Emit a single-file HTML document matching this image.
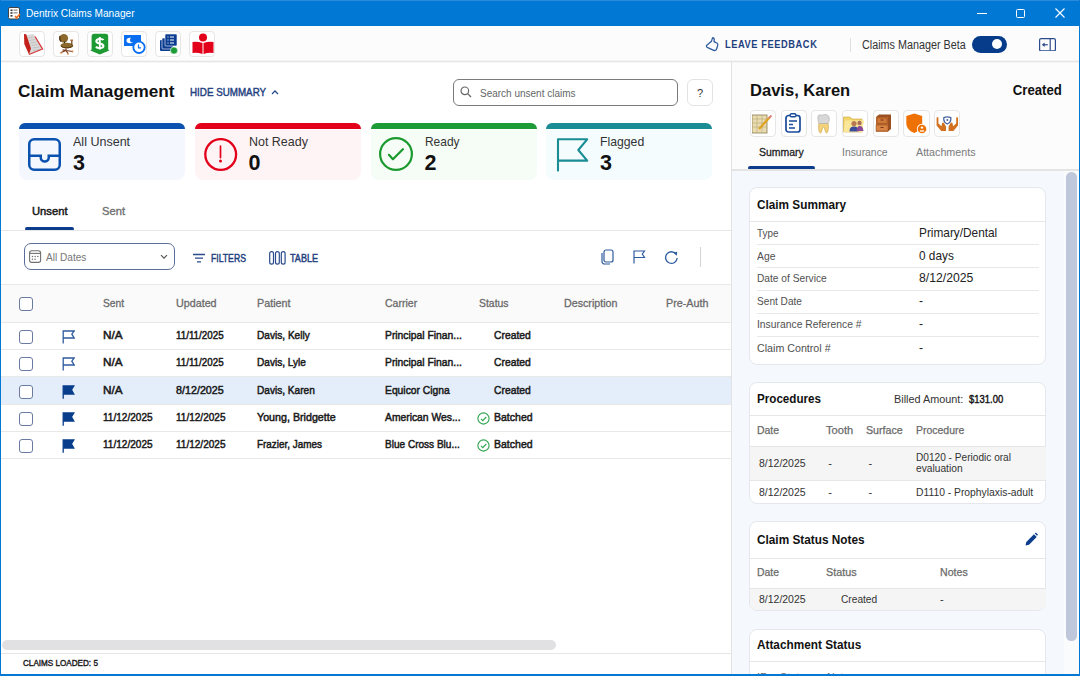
<!DOCTYPE html>
<html><head><meta charset="utf-8"><title>Dentrix Claims Manager</title>
<style>
html,body{margin:0;padding:0;width:1080px;height:676px;overflow:hidden;background:#fff}
body{position:relative;font-family:"Liberation Sans", sans-serif}
body>div,body>span,body>svg{position:absolute;display:block}
body>span{white-space:nowrap}
svg text{font-family:"Liberation Sans", sans-serif}
</style></head><body>
<div style="left:0px;top:0px;width:1080px;height:26px;background:#0078d4"></div>
<div style="left:0px;top:0px;width:1080px;height:1px;background:#2b8ada"></div>
<svg style="left:8px;top:7px;" width="13" height="13" viewBox="0 0 13 13"><rect x="0.5" y="0.5" width="11" height="11.5" rx="1.5" fill="#fff" stroke="#444" stroke-width="1"/>
<rect x="2.5" y="2.5" width="2" height="1.6" fill="#333"/><rect x="5.5" y="2.5" width="4" height="1.2" fill="#888"/>
<rect x="2.5" y="5.2" width="2" height="1.6" fill="#333"/><rect x="5.5" y="5.2" width="4" height="1.2" fill="#888"/>
<rect x="2.5" y="8" width="2" height="1.6" fill="#333"/>
<path d="M7 9 L8.6 10.8 L12 7" stroke="#f06a1a" stroke-width="1.6" fill="none"/></svg>
<span style="left:26px;transform-origin:left center;top:7.65px;font-size:11.05px;line-height:11.05px;font-weight:400;color:#ffffff;transform:scaleX(0.9157);">Dentrix Claims Manager</span>
<div style="left:977px;top:13px;width:10px;height:1px;background:#ffffff"></div>
<div style="left:1016px;top:8.5px;width:9px;height:9px;border:1px solid #fff;border-radius:1.5px;box-sizing:border-box"></div>
<svg style="left:1055px;top:8px;" width="10" height="10" viewBox="0 0 10 10"><path d="M0.5 0.5 L9.5 9.5 M9.5 0.5 L0.5 9.5" stroke="#fff" stroke-width="1.1"/></svg>
<div style="left:0px;top:26px;width:1080px;height:35px;background:#fcfcfc"></div>
<div style="left:19px;top:31px;width:26px;height:26px;background:#fff;border:1px solid #e6e6e6;border-radius:4px;box-sizing:border-box"></div>
<div style="left:53px;top:31px;width:26px;height:26px;background:#fff;border:1px solid #e6e6e6;border-radius:4px;box-sizing:border-box"></div>
<div style="left:87px;top:31px;width:26px;height:26px;background:#fff;border:1px solid #e6e6e6;border-radius:4px;box-sizing:border-box"></div>
<div style="left:121px;top:31px;width:26px;height:26px;background:#fff;border:1px solid #e6e6e6;border-radius:4px;box-sizing:border-box"></div>
<div style="left:155px;top:31px;width:26px;height:26px;background:#fff;border:1px solid #e6e6e6;border-radius:4px;box-sizing:border-box"></div>
<div style="left:189px;top:31px;width:26px;height:26px;background:#fff;border:1px solid #e6e6e6;border-radius:4px;box-sizing:border-box"></div>
<svg style="left:20px;top:31px;" width="26" height="26" viewBox="0 0 26 26"><path d="M6 4 L13.5 3 L22.5 18 L9 23.5 Z" fill="#d9d9d9"/>
<path d="M8.5 7 L13.5 6 M9.5 9.5 L15 8.5 M10.5 12 L16.5 11 M11.5 14.5 L18 13.5 M12.5 17 L19.5 16 M13 19.5 L20 18.5" stroke="#b8b8b8" stroke-width="0.7"/>
<path d="M15 5.5 L22.5 18 L9 23.5" fill="none" stroke="#d43a3a" stroke-width="1.3"/>
<path d="M4 3 L6.2 3.3 L11 17.5 L9 23.5 L4.3 13 Z" fill="#c4201c"/></svg>
<svg style="left:54px;top:31px;" width="26" height="26" viewBox="0 0 26 26"><ellipse cx="9.8" cy="7.2" rx="4.3" ry="4.3" fill="#8c6a2c"/>
<path d="M6 5 C5.5 7 5.8 9.5 7 10.5" stroke="#4a2a0a" stroke-width="1.2" fill="none"/>
<rect x="9.8" y="10.5" width="1.4" height="3" fill="#3a2a1a"/>
<ellipse cx="12.8" cy="14.5" rx="6.3" ry="2.8" fill="#8a6a2a"/>
<path d="M7 15 C9 17.5 16 17.5 19 15" stroke="#4a2a0a" stroke-width="0.9" fill="none"/>
<path d="M17.8 9.5 V14" stroke="#6a4a2a" stroke-width="1.3"/><path d="M16.3 9.2 H19" stroke="#b0602a" stroke-width="1.3"/>
<path d="M12 17.5 V19.5 M12 19.5 L7 21.5 M12 19.5 L14 22.5 M12 19.5 L18.5 20.5 M12 19.5 L8.5 18.8" stroke="#7a3a1a" stroke-width="1.2"/>
<circle cx="7" cy="21.8" r="0.9" fill="#d08040"/><circle cx="14" cy="22.8" r="0.9" fill="#d08040"/><circle cx="18.5" cy="20.5" r="0.9" fill="#d08040"/></svg>
<svg style="left:88px;top:31px;" width="26" height="26" viewBox="0 0 26 26"><path d="M6.2 2.8 H17.6 A2.6 2.6 0 0 1 20.2 5.4 V18.4 L21.3 19.4 L11.8 23.6 L2.3 19.4 L3.6 18.4 V5.4 A2.6 2.6 0 0 1 6.2 2.8 Z" fill="#1e9a35"/>
<path d="M15.4 9 C14.6 7.6 8.4 7.2 8.3 10.2 C8.2 13.2 15.4 11.6 15.4 14.9 C15.4 17.6 9.2 17.5 8 15.6" fill="none" stroke="#fff" stroke-width="2.1"/>
<path d="M11.8 6 V18.6" stroke="#fff" stroke-width="1.8"/></svg>
<svg style="left:124px;top:34px;" width="22" height="20" viewBox="0 0 22 20"><rect x="0" y="1" width="17" height="11" fill="#0a6ef0"/>
<ellipse cx="6" cy="6.5" rx="3.5" ry="2.8" fill="#fff"/><circle cx="8.5" cy="6" r="2.5" fill="#0a6ef0"/>
<circle cx="15" cy="13.3" r="5.7" fill="#fff" stroke="#0a6ef0" stroke-width="1.8"/>
<path d="M14.5 10.5 V13.8 H17" stroke="#0a6ef0" stroke-width="1.2" fill="none"/></svg>
<svg style="left:160px;top:34px;" width="18" height="20" viewBox="0 0 18 20"><rect x="0" y="6" width="11" height="11" rx="1" fill="#0b3d91"/>
<rect x="2" y="4" width="11" height="11" rx="1" fill="#0b3d91" stroke="#fff" stroke-width="0.6"/>
<rect x="5" y="0" width="12" height="12" rx="1" fill="#0b3d91" stroke="#fff" stroke-width="0.6"/>
<path d="M7.5 3 H8.5 M10 3 H14 M7.5 6 H8.5 M10 6 H14 M7.5 9 H8.5 M10 9 H14" stroke="#fff" stroke-width="1"/>
<circle cx="14" cy="16.5" r="3.6" fill="#1c9b37" stroke="#fff" stroke-width="0.6"/></svg>
<svg style="left:192px;top:33px;" width="22" height="22" viewBox="0 0 22 22"><circle cx="11" cy="4.5" r="4" fill="#e2001a"/>
<path d="M0.5 9 Q5 8 10.5 10 V21 Q5 19 0.5 20 Z" fill="#e2001a"/>
<path d="M21.5 9 Q17 8 11.5 10 V21 Q17 19 21.5 20 Z" fill="#e2001a"/></svg>
<svg style="left:704px;top:36px;" width="16" height="16" viewBox="0 0 16 16"><path d="M9.3 1.8 C10.3 2.2 10.4 4 10 5.6 L13.2 7.3 C14 7.8 13.9 8.8 13.6 9.6 L12.7 12.8 C12.3 14.2 11 14.8 9.7 14.3 L3.2 11.4 C2.4 11 2.2 9.9 2.8 9.2 L7.2 5.6 C7.8 4.6 8.2 2.8 8.4 2.2 C8.6 1.8 9 1.7 9.3 1.8 Z" fill="none" stroke="#2f5b9f" stroke-width="1.3" stroke-linejoin="round"/></svg>
<span style="left:724.5px;transform-origin:left center;top:38.53px;font-size:11.19px;line-height:11.19px;font-weight:700;color:#1f3f7f;transform:scaleX(0.8285);letter-spacing:0.7px">LEAVE FEEDBACK</span>
<div style="left:850px;top:38px;width:1px;height:14px;background:#e0e0e0"></div>
<span style="left:862px;transform-origin:left center;top:39.16px;font-size:12.21px;line-height:12.21px;font-weight:400;color:#333;transform:scaleX(0.8837);">Claims Manager Beta</span>
<div style="left:972.4px;top:35.7px;width:34.3px;height:17px;background:#063c8a;border-radius:8.5px"></div>
<div style="left:992.3px;top:39.3px;width:10.2px;height:10.2px;background:#fff;border-radius:50%"></div>
<svg style="left:1039px;top:37.5px;" width="17" height="13.5" viewBox="0 0 17 13.5"><rect x="0.6" y="0.6" width="15.8" height="12.3" rx="1.5" fill="none" stroke="#2b4b8c" stroke-width="1.2"/>
<path d="M11.2 1 V12.5" stroke="#2b4b8c" stroke-width="1.2"/>
<path d="M8.8 6.75 H4" stroke="#2b4b8c" stroke-width="1.2"/><path d="M2.8 6.75 L5.6 4.4 V9.1 Z" fill="#2b4b8c"/></svg>
<div style="left:0px;top:62px;width:731px;height:614px;background:#fff"></div>
<span style="left:18px;transform-origin:left center;top:84.23px;font-size:16.86px;line-height:16.86px;font-weight:700;color:#111;transform:scaleX(1.0185);">Claim Management</span>
<span style="left:189.7px;transform-origin:left center;top:87.13px;font-size:11.19px;line-height:11.19px;font-weight:400;color:#1f3f7f;transform:scaleX(0.8764);-webkit-text-stroke:0.45px #1f3f7f">HIDE SUMMARY</span>
<svg style="left:270.8px;top:89px;" width="8" height="6" viewBox="0 0 8 6"><path d="M1 5 L4 2 L7 5" stroke="#2b4b8c" stroke-width="1.3" fill="none"/></svg>
<div style="left:453px;top:79px;width:225px;height:27px;border:1px solid #7a7a7a;border-radius:6px;box-sizing:border-box;background:#fff"></div>
<svg style="left:460px;top:86px;" width="12" height="12" viewBox="0 0 12 12"><circle cx="4.8" cy="4.8" r="3.8" fill="none" stroke="#666" stroke-width="1.2"/><path d="M7.6 7.6 L11 11" stroke="#666" stroke-width="1.3"/></svg>
<span style="left:479.5px;transform-origin:left center;top:87.65px;font-size:11.05px;line-height:11.05px;font-weight:400;color:#666;transform:scaleX(0.9043);">Search unsent claims</span>
<div style="left:687px;top:79px;width:26px;height:27px;border:1px solid #e3e3e3;border-radius:6px;box-sizing:border-box;background:#fff"></div>
<span style="left:696.94px;transform-origin:center;top:87.69px;font-size:11px;line-height:11px;font-weight:400;color:#333;">?</span>
<div style="left:19px;top:123.2px;width:166px;height:5.6px;background:#0b52b0;border-radius:8px 8px 0 0"></div>
<div style="left:19px;top:129.8px;width:166px;height:50.6px;background:#f4f8fe;border-radius:0 0 8px 8px"></div>
<span style="left:73px;transform-origin:left center;top:136.07px;font-size:12.79px;line-height:12.79px;font-weight:400;color:#333;transform:scaleX(0.9800);">All Unsent</span>
<span style="left:73px;transform-origin:left center;top:152.99px;font-size:21.51px;line-height:21.51px;font-weight:700;color:#111;">3</span>
<div style="left:194.5px;top:123.2px;width:166px;height:5.6px;background:#e2001a;border-radius:8px 8px 0 0"></div>
<div style="left:194.5px;top:129.8px;width:166px;height:50.6px;background:#fff4f5;border-radius:0 0 8px 8px"></div>
<span style="left:248.5px;transform-origin:left center;top:136.07px;font-size:12.79px;line-height:12.79px;font-weight:400;color:#333;transform:scaleX(0.9753);">Not Ready</span>
<span style="left:248.5px;transform-origin:left center;top:152.99px;font-size:21.51px;line-height:21.51px;font-weight:700;color:#111;">0</span>
<div style="left:370.5px;top:123.2px;width:166px;height:5.6px;background:#1c9b37;border-radius:8px 8px 0 0"></div>
<div style="left:370.5px;top:129.8px;width:166px;height:50.6px;background:#f5fdf6;border-radius:0 0 8px 8px"></div>
<span style="left:424.5px;transform-origin:left center;top:136.07px;font-size:12.79px;line-height:12.79px;font-weight:400;color:#333;transform:scaleX(0.9336);">Ready</span>
<span style="left:424.5px;transform-origin:left center;top:152.99px;font-size:21.51px;line-height:21.51px;font-weight:700;color:#111;">2</span>
<div style="left:546px;top:123.2px;width:166px;height:5.6px;background:#1a8c94;border-radius:8px 8px 0 0"></div>
<div style="left:546px;top:129.8px;width:166px;height:50.6px;background:#f5fcfe;border-radius:0 0 8px 8px"></div>
<span style="left:600px;transform-origin:left center;top:136.07px;font-size:12.79px;line-height:12.79px;font-weight:400;color:#333;transform:scaleX(0.9566);">Flagged</span>
<span style="left:600px;transform-origin:left center;top:152.99px;font-size:21.51px;line-height:21.51px;font-weight:700;color:#111;">3</span>
<svg style="left:28px;top:138px;" width="34" height="34" viewBox="0 0 34 34"><rect x="1.25" y="1.25" width="30.5" height="30.5" rx="5" fill="none" stroke="#0b52b0" stroke-width="2.5"/>
<path d="M1.25 17.7 H12.75 V19.6 A4 4 0 0 0 20.75 19.6 V17.7 H31.75" fill="none" stroke="#0b52b0" stroke-width="2.5"/></svg>
<svg style="left:204px;top:138px;" width="34" height="34" viewBox="0 0 34 34"><circle cx="16.7" cy="16.5" r="15.4" fill="none" stroke="#e2001a" stroke-width="2.3"/>
<path d="M16.5 8 V19.6" stroke="#e2001a" stroke-width="1.7" stroke-linecap="round"/><circle cx="16.5" cy="23" r="1.5" fill="#e2001a"/></svg>
<svg style="left:379px;top:137px;" width="35" height="35" viewBox="0 0 35 35"><circle cx="17" cy="17" r="15.9" fill="none" stroke="#1a9a2e" stroke-width="2.2"/>
<path d="M9.9 17.8 L13.9 22.2 L23.9 12.2" fill="none" stroke="#1a9a2e" stroke-width="2.2" stroke-linecap="round" stroke-linejoin="round"/></svg>
<svg style="left:556px;top:137px;" width="33" height="35" viewBox="0 0 33 35"><path d="M2 33.6 V2.3 H31.2 L22.3 13 L31.2 23.6 H2" fill="none" stroke="#1a8c94" stroke-width="2.1" stroke-linecap="round" stroke-linejoin="round"/></svg>
<span style="left:31.7px;transform-origin:left center;top:206.20px;font-size:11.34px;line-height:11.34px;font-weight:400;color:#1a1a1a;transform:scaleX(0.9887);-webkit-text-stroke:0.5px #1a1a1a">Unsent</span>
<span style="left:101.7px;transform-origin:left center;top:206.20px;font-size:11.34px;line-height:11.34px;font-weight:400;color:#707070;transform:scaleX(0.9866);-webkit-text-stroke:0.35px #707070">Sent</span>
<div style="left:25px;top:227px;width:49px;height:3.5px;background:#0b3d8c;border-radius:2px"></div>
<div style="left:1px;top:230px;width:730px;height:1px;background:#e6e6e6"></div>
<div style="left:24px;top:243px;width:151px;height:27px;border:1px solid #5b6e99;border-radius:7px;box-sizing:border-box"></div>
<svg style="left:28px;top:249px;" width="14" height="15" viewBox="0 0 14 15"><rect x="1.6" y="1.8" width="11" height="11.6" rx="2.2" fill="none" stroke="#707070" stroke-width="1.1"/>
<path d="M1.6 4.4 H12.6" stroke="#707070" stroke-width="1.1"/>
<circle cx="4.5" cy="7.6" r="0.75" fill="#707070"/><circle cx="7.1" cy="7.6" r="0.75" fill="#707070"/><circle cx="9.8" cy="7.6" r="0.75" fill="#707070"/>
<circle cx="4.5" cy="10.3" r="0.75" fill="#707070"/><circle cx="7.1" cy="10.3" r="0.75" fill="#707070"/></svg>
<span style="left:46.3px;transform-origin:left center;top:251.57px;font-size:10.9px;line-height:10.9px;font-weight:400;color:#777;transform:scaleX(0.9267);">All Dates</span>
<svg style="left:160px;top:254px;" width="8" height="6" viewBox="0 0 8 6"><path d="M1 1.2 L4 4.2 L7 1.2" stroke="#555" stroke-width="1.2" fill="none"/></svg>
<svg style="left:192px;top:252px;" width="14" height="12" viewBox="0 0 14 12"><path d="M1 2.5 H13 M3 6.2 H11 M5 9.9 H9" stroke="#2b4b8c" stroke-width="1.3"/></svg>
<span style="left:210.6px;transform-origin:left center;top:253.18px;font-size:11.48px;line-height:11.48px;font-weight:400;color:#1f3f7f;transform:scaleX(0.7536);-webkit-text-stroke:0.5px #1f3f7f">FILTERS</span>
<svg style="left:268.5px;top:250.5px;" width="17" height="14" viewBox="0 0 17 14"><rect x="0.7" y="0.7" width="3.8" height="12.4" rx="1.9" fill="none" stroke="#2b4b8c" stroke-width="1.2"/>
<rect x="6.5" y="0.7" width="3.8" height="12.4" rx="1.9" fill="none" stroke="#2b4b8c" stroke-width="1.2"/>
<rect x="12.3" y="0.7" width="3.8" height="12.4" rx="1.9" fill="none" stroke="#2b4b8c" stroke-width="1.2"/></svg>
<span style="left:289.7px;transform-origin:left center;top:253.18px;font-size:11.48px;line-height:11.48px;font-weight:400;color:#1f3f7f;transform:scaleX(0.7891);-webkit-text-stroke:0.5px #1f3f7f">TABLE</span>
<svg style="left:601px;top:249px;" width="13" height="16" viewBox="0 0 13 16"><rect x="3" y="1" width="9" height="12" rx="2" fill="none" stroke="#2f5b9f" stroke-width="1.2"/>
<path d="M1 4 V12.5 A2.5 2.5 0 0 0 3.5 15 H9" fill="none" stroke="#2f5b9f" stroke-width="1.2"/></svg>
<svg style="left:633px;top:250px;" width="13" height="14" viewBox="0 0 13 14"><path d="M1 13.5 V1 H11.5 L9.3 4 L11.5 7.5 H1" fill="none" stroke="#2f5b9f" stroke-width="1.2"/></svg>
<svg style="left:664px;top:250px;" width="15" height="15" viewBox="0 0 15 15"><path d="M12 4 A5.8 5.8 0 1 0 13.2 8" fill="none" stroke="#2f5b9f" stroke-width="1.3"/>
<path d="M9.5 2.8 L13.2 1.8 L12.8 5.8 Z" fill="#2f5b9f"/></svg>
<div style="left:700px;top:247px;width:1px;height:20px;background:#d4d4d4"></div>
<div style="left:1px;top:284px;width:730px;height:1px;background:#e8e8e8"></div>
<div style="left:1px;top:285px;width:730px;height:37px;background:#fafafa"></div>
<div style="left:1px;top:322px;width:730px;height:1.3px;background:#e8e8e8"></div>
<div style="left:19.2px;top:296.6px;width:14px;height:14px;border:1.6px solid #6b7aa0;border-radius:3px;box-sizing:border-box;background:#fff"></div>
<span style="left:103.4px;transform-origin:left center;top:297.50px;font-size:11.34px;line-height:11.34px;font-weight:400;color:#6a6a6a;transform:scaleX(0.9051);-webkit-text-stroke:0.3px #6a6a6a">Sent</span>
<span style="left:176px;transform-origin:left center;top:297.50px;font-size:11.34px;line-height:11.34px;font-weight:400;color:#6a6a6a;transform:scaleX(0.9476);-webkit-text-stroke:0.3px #6a6a6a">Updated</span>
<span style="left:256.8px;transform-origin:left center;top:297.50px;font-size:11.34px;line-height:11.34px;font-weight:400;color:#6a6a6a;transform:scaleX(0.9523);-webkit-text-stroke:0.3px #6a6a6a">Patient</span>
<span style="left:385px;transform-origin:left center;top:297.50px;font-size:11.34px;line-height:11.34px;font-weight:400;color:#6a6a6a;transform:scaleX(0.9300);-webkit-text-stroke:0.3px #6a6a6a">Carrier</span>
<span style="left:478.5px;transform-origin:left center;top:297.50px;font-size:11.34px;line-height:11.34px;font-weight:400;color:#6a6a6a;transform:scaleX(0.9214);-webkit-text-stroke:0.3px #6a6a6a">Status</span>
<span style="left:564.2px;transform-origin:left center;top:297.50px;font-size:11.34px;line-height:11.34px;font-weight:400;color:#6a6a6a;transform:scaleX(0.9440);-webkit-text-stroke:0.3px #6a6a6a">Description</span>
<span style="left:666.4px;transform-origin:left center;top:297.50px;font-size:11.34px;line-height:11.34px;font-weight:400;color:#6a6a6a;transform:scaleX(0.9481);-webkit-text-stroke:0.3px #6a6a6a">Pre-Auth</span>
<div style="left:1px;top:349.0px;width:730px;height:1.3px;background:#e8e8e8"></div>
<div style="left:19.2px;top:329.7px;width:14px;height:14px;border:1.6px solid #6b7aa0;border-radius:3px;box-sizing:border-box;background:#fff"></div>
<svg style="left:61.5px;top:329.7px;" width="13" height="14" viewBox="0 0 13 14"><path d="M1.2 13.5 V1 H12.2 L9.8 4.2 L12.2 8 H1.2" fill="none" stroke="#2f5b9f" stroke-width="1.3"/></svg>
<span style="left:103.4px;transform-origin:left center;top:329.73px;font-size:11.19px;line-height:11.19px;font-weight:400;color:#1a1a1a;transform:scaleX(1.0506);-webkit-text-stroke:0.5px #1a1a1a">N/A</span>
<span style="left:176px;transform-origin:left center;top:329.73px;font-size:11.19px;line-height:11.19px;font-weight:400;color:#1a1a1a;transform:scaleX(0.8759);-webkit-text-stroke:0.5px #1a1a1a">11/11/2025</span>
<span style="left:256.8px;transform-origin:left center;top:329.73px;font-size:11.19px;line-height:11.19px;font-weight:400;color:#1a1a1a;transform:scaleX(0.9033);-webkit-text-stroke:0.5px #1a1a1a">Davis, Kelly</span>
<span style="left:385px;transform-origin:left center;top:329.73px;font-size:11.19px;line-height:11.19px;font-weight:400;color:#1a1a1a;transform:scaleX(0.9229);-webkit-text-stroke:0.5px #1a1a1a">Principal Finan...</span>
<span style="left:494px;transform-origin:left center;top:329.73px;font-size:11.19px;line-height:11.19px;font-weight:400;color:#1a1a1a;transform:scaleX(0.9243);-webkit-text-stroke:0.5px #1a1a1a">Created</span>
<div style="left:1px;top:376.40000000000003px;width:730px;height:1.3px;background:#e8e8e8"></div>
<div style="left:19.2px;top:357.09999999999997px;width:14px;height:14px;border:1.6px solid #6b7aa0;border-radius:3px;box-sizing:border-box;background:#fff"></div>
<svg style="left:61.5px;top:357.09999999999997px;" width="13" height="14" viewBox="0 0 13 14"><path d="M1.2 13.5 V1 H12.2 L9.8 4.2 L12.2 8 H1.2" fill="none" stroke="#2f5b9f" stroke-width="1.3"/></svg>
<span style="left:103.4px;transform-origin:left center;top:357.13px;font-size:11.19px;line-height:11.19px;font-weight:400;color:#1a1a1a;transform:scaleX(1.0506);-webkit-text-stroke:0.5px #1a1a1a">N/A</span>
<span style="left:176px;transform-origin:left center;top:357.13px;font-size:11.19px;line-height:11.19px;font-weight:400;color:#1a1a1a;transform:scaleX(0.8759);-webkit-text-stroke:0.5px #1a1a1a">11/11/2025</span>
<span style="left:256.8px;transform-origin:left center;top:357.13px;font-size:11.19px;line-height:11.19px;font-weight:400;color:#1a1a1a;transform:scaleX(0.9003);-webkit-text-stroke:0.5px #1a1a1a">Davis, Lyle</span>
<span style="left:385px;transform-origin:left center;top:357.13px;font-size:11.19px;line-height:11.19px;font-weight:400;color:#1a1a1a;transform:scaleX(0.9229);-webkit-text-stroke:0.5px #1a1a1a">Principal Finan...</span>
<span style="left:494px;transform-origin:left center;top:357.13px;font-size:11.19px;line-height:11.19px;font-weight:400;color:#1a1a1a;transform:scaleX(0.9243);-webkit-text-stroke:0.5px #1a1a1a">Created</span>
<div style="left:1px;top:377.1px;width:730px;height:27.5px;background:#e4eefb"></div>
<div style="left:1px;top:403.90000000000003px;width:730px;height:1.3px;background:#e8e8e8"></div>
<div style="left:19.2px;top:384.5px;width:14px;height:14px;border:1.6px solid #6b7aa0;border-radius:3px;box-sizing:border-box;background:#fff"></div>
<svg style="left:61.5px;top:384.70000000000005px;" width="13" height="14" viewBox="0 0 13 14"><path d="M1.2 13.8 V1 H11.8 L9.4 4.8 L11.8 9.1 H1.2" fill="#073d8a" stroke="#073d8a" stroke-width="1.3"/></svg>
<span style="left:103.4px;transform-origin:left center;top:384.53px;font-size:11.19px;line-height:11.19px;font-weight:400;color:#1a1a1a;transform:scaleX(1.0506);-webkit-text-stroke:0.5px #1a1a1a">N/A</span>
<span style="left:176px;transform-origin:left center;top:384.53px;font-size:11.19px;line-height:11.19px;font-weight:400;color:#1a1a1a;transform:scaleX(0.9602);-webkit-text-stroke:0.5px #1a1a1a">8/12/2025</span>
<span style="left:256.8px;transform-origin:left center;top:384.53px;font-size:11.19px;line-height:11.19px;font-weight:400;color:#1a1a1a;transform:scaleX(0.9025);-webkit-text-stroke:0.5px #1a1a1a">Davis, Karen</span>
<span style="left:385px;transform-origin:left center;top:384.53px;font-size:11.19px;line-height:11.19px;font-weight:400;color:#1a1a1a;transform:scaleX(0.9220);-webkit-text-stroke:0.5px #1a1a1a">Equicor Cigna</span>
<span style="left:494px;transform-origin:left center;top:384.53px;font-size:11.19px;line-height:11.19px;font-weight:400;color:#1a1a1a;transform:scaleX(0.9243);-webkit-text-stroke:0.5px #1a1a1a">Created</span>
<div style="left:1px;top:430.8px;width:730px;height:1.3px;background:#e8e8e8"></div>
<div style="left:19.2px;top:412.0px;width:14px;height:14px;border:1.6px solid #6b7aa0;border-radius:3px;box-sizing:border-box;background:#fff"></div>
<svg style="left:61.5px;top:412.20000000000005px;" width="13" height="14" viewBox="0 0 13 14"><path d="M1.2 13.8 V1 H11.8 L9.4 4.8 L11.8 9.1 H1.2" fill="#073d8a" stroke="#073d8a" stroke-width="1.3"/></svg>
<span style="left:103.4px;transform-origin:left center;top:412.03px;font-size:11.19px;line-height:11.19px;font-weight:400;color:#1a1a1a;transform:scaleX(0.8990);-webkit-text-stroke:0.5px #1a1a1a">11/12/2025</span>
<span style="left:176px;transform-origin:left center;top:412.03px;font-size:11.19px;line-height:11.19px;font-weight:400;color:#1a1a1a;transform:scaleX(0.8972);-webkit-text-stroke:0.5px #1a1a1a">11/12/2025</span>
<span style="left:256.8px;transform-origin:left center;top:412.03px;font-size:11.19px;line-height:11.19px;font-weight:400;color:#1a1a1a;transform:scaleX(0.9559);-webkit-text-stroke:0.5px #1a1a1a">Young, Bridgette</span>
<span style="left:385px;transform-origin:left center;top:412.03px;font-size:11.19px;line-height:11.19px;font-weight:400;color:#1a1a1a;transform:scaleX(0.9223);-webkit-text-stroke:0.5px #1a1a1a">American Wes...</span>
<svg style="left:477px;top:411.6px;" width="13" height="13" viewBox="0 0 13 13"><circle cx="6.5" cy="6.5" r="5.6" fill="none" stroke="#2ea44f" stroke-width="1.1"/><path d="M4 6.8 L5.8 8.6 L9.2 5" fill="none" stroke="#2ea44f" stroke-width="1.1"/></svg>
<span style="left:494px;transform-origin:left center;top:412.03px;font-size:11.19px;line-height:11.19px;font-weight:400;color:#1a1a1a;transform:scaleX(0.9400);-webkit-text-stroke:0.5px #1a1a1a">Batched</span>
<div style="left:1px;top:458.2px;width:730px;height:1.3px;background:#e8e8e8"></div>
<div style="left:19.2px;top:438.9px;width:14px;height:14px;border:1.6px solid #6b7aa0;border-radius:3px;box-sizing:border-box;background:#fff"></div>
<svg style="left:61.5px;top:439.1px;" width="13" height="14" viewBox="0 0 13 14"><path d="M1.2 13.8 V1 H11.8 L9.4 4.8 L11.8 9.1 H1.2" fill="#073d8a" stroke="#073d8a" stroke-width="1.3"/></svg>
<span style="left:103.4px;transform-origin:left center;top:438.93px;font-size:11.19px;line-height:11.19px;font-weight:400;color:#1a1a1a;transform:scaleX(0.8990);-webkit-text-stroke:0.5px #1a1a1a">11/12/2025</span>
<span style="left:176px;transform-origin:left center;top:438.93px;font-size:11.19px;line-height:11.19px;font-weight:400;color:#1a1a1a;transform:scaleX(0.8972);-webkit-text-stroke:0.5px #1a1a1a">11/12/2025</span>
<span style="left:256.8px;transform-origin:left center;top:438.93px;font-size:11.19px;line-height:11.19px;font-weight:400;color:#1a1a1a;transform:scaleX(0.8847);-webkit-text-stroke:0.5px #1a1a1a">Frazier, James</span>
<span style="left:385px;transform-origin:left center;top:438.93px;font-size:11.19px;line-height:11.19px;font-weight:400;color:#1a1a1a;transform:scaleX(0.8977);-webkit-text-stroke:0.5px #1a1a1a">Blue Cross Blu...</span>
<svg style="left:477px;top:438.5px;" width="13" height="13" viewBox="0 0 13 13"><circle cx="6.5" cy="6.5" r="5.6" fill="none" stroke="#2ea44f" stroke-width="1.1"/><path d="M4 6.8 L5.8 8.6 L9.2 5" fill="none" stroke="#2ea44f" stroke-width="1.1"/></svg>
<span style="left:494px;transform-origin:left center;top:438.93px;font-size:11.19px;line-height:11.19px;font-weight:400;color:#1a1a1a;transform:scaleX(0.9400);-webkit-text-stroke:0.5px #1a1a1a">Batched</span>
<div style="left:2px;top:640.4px;width:554px;height:10px;background:#e1e1e3;border-radius:5px"></div>
<div style="left:1px;top:653px;width:730px;height:1px;background:#e6e6e6"></div>
<span style="left:23px;transform-origin:left center;top:658.97px;font-size:9.01px;line-height:9.01px;font-weight:400;color:#1a1a1a;transform:scaleX(0.9021);-webkit-text-stroke:0.4px #1a1a1a">CLAIMS LOADED: 5</span>
<div style="left:731px;top:62px;width:1px;height:614px;background:#e3e3e3"></div>
<div style="left:732px;top:62px;width:348px;height:108px;background:#fcfcfc"></div>
<div style="left:0px;top:60px;width:1080px;height:3.2px;background:linear-gradient(rgba(250,250,250,0),#e6e6e6 50%,rgba(255,255,255,0))"></div>
<span style="left:749.6px;transform-origin:left center;top:81.70px;font-size:17.01px;line-height:17.01px;font-weight:700;color:#111;transform:scaleX(0.9728);">Davis, Karen</span>
<span style="right:18.5px;transform-origin:right center;top:83.59px;font-size:13.95px;line-height:13.95px;font-weight:700;color:#111;transform:scaleX(0.9479);">Created</span>
<div style="left:749.5px;top:110.3px;width:26.3px;height:26.3px;background:#fff;border:1px solid #e6e6e6;border-radius:4px;box-sizing:border-box"></div>
<div style="left:780.5px;top:110.3px;width:26.3px;height:26.3px;background:#fff;border:1px solid #e6e6e6;border-radius:4px;box-sizing:border-box"></div>
<div style="left:811px;top:110.3px;width:26.3px;height:26.3px;background:#fff;border:1px solid #e6e6e6;border-radius:4px;box-sizing:border-box"></div>
<div style="left:841.5px;top:110.3px;width:26.3px;height:26.3px;background:#fff;border:1px solid #e6e6e6;border-radius:4px;box-sizing:border-box"></div>
<div style="left:872.5px;top:110.3px;width:26.3px;height:26.3px;background:#fff;border:1px solid #e6e6e6;border-radius:4px;box-sizing:border-box"></div>
<div style="left:903.3px;top:110.3px;width:26.3px;height:26.3px;background:#fff;border:1px solid #e6e6e6;border-radius:4px;box-sizing:border-box"></div>
<div style="left:933.7px;top:110.3px;width:26.3px;height:26.3px;background:#fff;border:1px solid #e6e6e6;border-radius:4px;box-sizing:border-box"></div>
<svg style="left:752px;top:114px;" width="21" height="20" viewBox="0 0 21 20"><rect x="0" y="1" width="15" height="18" fill="#e8dcb0" stroke="#8a7a50" stroke-width="0.8"/>
<path d="M0 5 H15 M0 9 H15 M0 13 H15 M5 1 V19 M10 1 V19" stroke="#b9a778" stroke-width="0.6"/>
<path d="M7 15 L18 3" stroke="#e0a020" stroke-width="2.2"/><path d="M17 4 L19.5 1.5" stroke="#e08080" stroke-width="2"/></svg>
<svg style="left:785px;top:113px;" width="16" height="20" viewBox="0 0 16 20"><rect x="1" y="2.5" width="14" height="16.5" rx="2.5" fill="none" stroke="#1a4a9a" stroke-width="1.7"/>
<rect x="5" y="0.8" width="6" height="3" rx="1.5" fill="#fff" stroke="#1a4a9a" stroke-width="1.4"/>
<path d="M4 8 H12 M4 11.5 H8 M4 15 H10" stroke="#1a4a9a" stroke-width="1.5"/></svg>
<svg style="left:817px;top:114px;" width="13" height="20" viewBox="0 0 13 20"><path d="M2 9 C1 14 2 19 3.5 19 C5 19 5 13 6.5 13 C8 13 8 19 9.5 19 C11 19 12 14 11 9 Z" fill="#f2d27a" stroke="#c9a040" stroke-width="0.6"/>
<path d="M1 5 C0 1 3 0 5 1.5 C6.5 0 9 0 11 1.5 C13 3 12.5 8 11 9.5 H2 C1.5 9 1 7 1 5 Z" fill="#d8d8d8" stroke="#aaa" stroke-width="0.6"/></svg>
<svg style="left:843px;top:114px;" width="22" height="19" viewBox="0 0 22 19"><path d="M0.5 3 H7 L9 5 H19 V18 H0.5 Z" fill="#f3d46a" stroke="#c9a43a" stroke-width="0.6"/>
<path d="M2 6.5 H21 L19 18 H0.5 Z" fill="#fbe79a"/>
<circle cx="11" cy="9.5" r="2.6" fill="#b87a50"/><path d="M6.5 17.5 C6.5 13.5 8.5 12.5 11 12.5 C13.5 12.5 15.5 13.5 15.5 17.5 Z" fill="#3a4c9a"/>
<circle cx="16.5" cy="9" r="2.2" fill="#a8705a"/><path d="M13.5 17 C14 13 15 12 16.8 12 C18.6 12 20 13 20.5 17 Z" fill="#8a4a9a"/></svg>
<svg style="left:875px;top:114px;" width="19" height="18" viewBox="0 0 19 18"><path d="M1 3 L4 0.5 H16 V15 L13 17.5 H1 Z" fill="#9a5020"/>
<rect x="1" y="3" width="12" height="14.5" fill="#c06a30"/>
<rect x="2" y="4" width="10" height="5.5" fill="#d07838" stroke="#8a4818" stroke-width="0.5"/>
<rect x="1" y="11" width="12" height="6" fill="#d98444" stroke="#8a4818" stroke-width="0.5"/>
<path d="M5.5 6 H8.5 M5.5 13.5 H8.5" stroke="#5a2a08" stroke-width="0.8"/></svg>
<svg style="left:906px;top:113px;" width="21" height="21" viewBox="0 0 21 21"><path d="M8.2 0.5 L16.2 3 V10 C16.2 15 12.5 18.5 8.2 20 C3.9 18.5 0.3 15 0.3 10 V3 Z" fill="#ee7203"/>
<circle cx="16" cy="16" r="5.2" fill="#fff"/><circle cx="16" cy="16" r="4.3" fill="#ee7203"/>
<circle cx="16" cy="14.6" r="1.2" fill="#fff"/><path d="M13.9 18 H18.1" stroke="#fff" stroke-width="1.3"/></svg>
<svg style="left:933px;top:110px;" width="28" height="27" viewBox="0 0 28 27"><path d="M3.6 7.6 Q4.5 6.8 5.4 7.6 V13.6 L8.6 16.2 L9 13.2 Q10 12 11 13 L13 16.5 V21 H8.2 L3.6 15.6 Z" fill="#d2701f"/>
<path d="M25 7.6 Q24.1 6.8 23.2 7.6 V13.6 L20 16.2 L19.6 13.2 Q18.6 12 17.6 13 L15.6 16.5 V21 H20.4 L25 15.6 Z" fill="#d2701f"/>
<path d="M10.8 7.6 Q14.3 6 17.8 7.6 V9.6 C17.8 12 16 13.3 14.3 14 C12.6 13.3 10.8 12 10.8 9.6 Z" fill="#fff" stroke="#4a64a0" stroke-width="1.3"/>
<circle cx="14.3" cy="10" r="1" fill="#4a64a0"/></svg>
<span style="left:759.4px;transform-origin:left center;top:146.85px;font-size:11.05px;line-height:11.05px;font-weight:400;color:#222;transform:scaleX(0.9478);-webkit-text-stroke:0.3px #222">Summary</span>
<span style="left:841.6px;transform-origin:left center;top:146.85px;font-size:11.05px;line-height:11.05px;font-weight:400;color:#7a7a7a;transform:scaleX(0.9399);">Insurance</span>
<span style="left:916.4px;transform-origin:left center;top:146.85px;font-size:11.05px;line-height:11.05px;font-weight:400;color:#7a7a7a;transform:scaleX(0.9690);">Attachments</span>
<div style="left:747.7px;top:166px;width:67.5px;height:3.6px;background:#0b3d8c;border-radius:2px"></div>
<div style="left:732px;top:169px;width:347px;height:2px;background:#e4e4e4"></div>
<div style="left:732px;top:171px;width:347px;height:506px;background:#f5f9fd"></div>
<div style="left:1063.5px;top:171px;width:15px;height:506px;background:#f9fbfd"></div>
<div style="left:1066.2px;top:171.5px;width:10.4px;height:469px;background:#bfc8da;border-radius:5.2px"></div>
<div style="left:749.4px;top:187.4px;width:297.1px;height:177.49999999999997px;background:#fff;border:1px solid #e4e7ec;border-radius:8px;box-sizing:border-box"></div>
<span style="left:757px;transform-origin:left center;top:199.25px;font-size:12.94px;line-height:12.94px;font-weight:700;color:#111;transform:scaleX(0.9111);">Claim Summary</span>
<div style="left:750px;top:220.5px;width:296px;height:1px;background:#e6e6e6"></div>
<span style="left:757px;transform-origin:left center;top:228.59px;font-size:10.17px;line-height:10.17px;font-weight:400;color:#505050;transform:scaleX(0.9713);">Type</span>
<span style="left:919px;transform-origin:left center;top:226.62px;font-size:12.14px;line-height:12.14px;font-weight:400;color:#222;transform:scaleX(0.9752);">Primary/Dental</span>
<div style="left:757px;top:244.2px;width:282px;height:1px;background:#e8e8e8"></div>
<span style="left:757px;transform-origin:left center;top:251.69px;font-size:10.17px;line-height:10.17px;font-weight:400;color:#505050;transform:scaleX(1.0178);">Age</span>
<span style="left:919px;transform-origin:left center;top:249.72px;font-size:12.14px;line-height:12.14px;font-weight:400;color:#222;transform:scaleX(0.9739);">0 days</span>
<div style="left:757px;top:267.25px;width:282px;height:1px;background:#e8e8e8"></div>
<span style="left:757px;transform-origin:left center;top:274.39px;font-size:10.17px;line-height:10.17px;font-weight:400;color:#505050;transform:scaleX(1.0038);">Date of Service</span>
<span style="left:919px;transform-origin:left center;top:272.42px;font-size:12.14px;line-height:12.14px;font-weight:400;color:#222;transform:scaleX(1.0083);">8/12/2025</span>
<div style="left:757px;top:290.3px;width:282px;height:1px;background:#e8e8e8"></div>
<span style="left:757px;transform-origin:left center;top:297.19px;font-size:10.17px;line-height:10.17px;font-weight:400;color:#505050;transform:scaleX(0.9962);">Sent Date</span>
<span style="left:919px;transform-origin:left center;top:295.22px;font-size:12.14px;line-height:12.14px;font-weight:400;color:#222;">-</span>
<div style="left:757px;top:313.35px;width:282px;height:1px;background:#e8e8e8"></div>
<span style="left:757px;transform-origin:left center;top:320.39px;font-size:10.17px;line-height:10.17px;font-weight:400;color:#505050;transform:scaleX(1.0179);">Insurance Reference #</span>
<span style="left:919px;transform-origin:left center;top:318.42px;font-size:12.14px;line-height:12.14px;font-weight:400;color:#222;">-</span>
<div style="left:757px;top:336.4px;width:282px;height:1px;background:#e8e8e8"></div>
<span style="left:757px;transform-origin:left center;top:343.59px;font-size:10.17px;line-height:10.17px;font-weight:400;color:#505050;transform:scaleX(1.0514);">Claim Control #</span>
<span style="left:919px;transform-origin:left center;top:341.62px;font-size:12.14px;line-height:12.14px;font-weight:400;color:#222;">-</span>
<div style="left:749.4px;top:382.2px;width:297.1px;height:121.60000000000002px;background:#fff;border:1px solid #e4e7ec;border-radius:8px;box-sizing:border-box"></div>
<span style="left:757px;transform-origin:left center;top:392.40px;font-size:13.23px;line-height:13.23px;font-weight:700;color:#111;transform:scaleX(0.8797);">Procedures</span>
<span style="left:894.1px;transform-origin:left center;top:394.35px;font-size:11.05px;line-height:11.05px;font-weight:400;color:#333;transform:scaleX(0.9812);">Billed Amount:</span>
<span style="left:968.7px;transform-origin:left center;top:394.35px;font-size:11.05px;line-height:11.05px;font-weight:400;color:#111;transform:scaleX(0.8563);-webkit-text-stroke:0.4px #111">$131.00</span>
<div style="left:750px;top:415.3px;width:296px;height:1px;background:#e6e6e6"></div>
<span style="left:757px;transform-origin:left center;top:424.85px;font-size:11.05px;line-height:11.05px;font-weight:400;color:#6a6a6a;transform:scaleX(0.9467);-webkit-text-stroke:0.25px #6a6a6a">Date</span>
<span style="left:826px;transform-origin:left center;top:424.85px;font-size:11.05px;line-height:11.05px;font-weight:400;color:#6a6a6a;transform:scaleX(1.0062);-webkit-text-stroke:0.25px #6a6a6a">Tooth</span>
<span style="left:866px;transform-origin:left center;top:424.85px;font-size:11.05px;line-height:11.05px;font-weight:400;color:#6a6a6a;transform:scaleX(0.9664);-webkit-text-stroke:0.25px #6a6a6a">Surface</span>
<span style="left:916px;transform-origin:left center;top:424.85px;font-size:11.05px;line-height:11.05px;font-weight:400;color:#6a6a6a;transform:scaleX(0.9476);-webkit-text-stroke:0.25px #6a6a6a">Procedure</span>
<div style="left:750px;top:445.5px;width:296px;height:1px;background:#e6e6e6"></div>
<div style="left:750px;top:446.5px;width:296px;height:33.8px;background:#f5f5f5"></div>
<div style="left:750px;top:480.3px;width:296px;height:1px;background:#e6e6e6"></div>
<span style="left:758.6px;transform-origin:left center;top:457.55px;font-size:11.05px;line-height:11.05px;font-weight:400;color:#333;transform:scaleX(0.9480);">8/12/2025</span>
<span style="left:828.3px;transform-origin:left center;top:457.55px;font-size:11.05px;line-height:11.05px;font-weight:400;color:#333;">-</span>
<span style="left:868.4px;transform-origin:left center;top:457.55px;font-size:11.05px;line-height:11.05px;font-weight:400;color:#333;">-</span>
<span style="left:916px;transform-origin:left center;top:451.95px;font-size:11.05px;line-height:11.05px;font-weight:400;color:#333;transform:scaleX(0.9154);">D0120 - Periodic oral</span>
<span style="left:916px;transform-origin:left center;top:463.25px;font-size:11.05px;line-height:11.05px;font-weight:400;color:#333;transform:scaleX(0.9251);">evaluation</span>
<span style="left:758.6px;transform-origin:left center;top:486.65px;font-size:11.05px;line-height:11.05px;font-weight:400;color:#333;transform:scaleX(0.9480);">8/12/2025</span>
<span style="left:828.3px;transform-origin:left center;top:486.65px;font-size:11.05px;line-height:11.05px;font-weight:400;color:#333;">-</span>
<span style="left:868.4px;transform-origin:left center;top:486.65px;font-size:11.05px;line-height:11.05px;font-weight:400;color:#333;">-</span>
<span style="left:916px;transform-origin:left center;top:486.65px;font-size:11.05px;line-height:11.05px;font-weight:400;color:#333;transform:scaleX(0.9341);">D1110 - Prophylaxis-adult</span>
<div style="left:749.4px;top:521.4px;width:297.1px;height:89.5px;background:#fff;border:1px solid #e4e7ec;border-radius:8px;box-sizing:border-box"></div>
<span style="left:757px;transform-origin:left center;top:533.43px;font-size:13.08px;line-height:13.08px;font-weight:700;color:#111;transform:scaleX(0.9028);">Claim Status Notes</span>
<svg style="left:1024px;top:532px;" width="14" height="15" viewBox="0 0 14 15"><path d="M1.5 13.5 L2.3 10 L10 2.3 L12.7 5 L5 12.7 Z" fill="#0b3d8c"/><path d="M10.8 1.5 L11.8 0.5 L14 2.7 L13 3.7 Z" fill="#0b3d8c"/></svg>
<div style="left:750px;top:557.8px;width:296px;height:1px;background:#e6e6e6"></div>
<span style="left:757px;transform-origin:left center;top:566.85px;font-size:11.05px;line-height:11.05px;font-weight:400;color:#6a6a6a;transform:scaleX(0.9467);-webkit-text-stroke:0.25px #6a6a6a">Date</span>
<span style="left:826px;transform-origin:left center;top:566.85px;font-size:11.05px;line-height:11.05px;font-weight:400;color:#6a6a6a;transform:scaleX(0.9768);-webkit-text-stroke:0.25px #6a6a6a">Status</span>
<span style="left:940px;transform-origin:left center;top:566.85px;font-size:11.05px;line-height:11.05px;font-weight:400;color:#6a6a6a;transform:scaleX(0.9598);-webkit-text-stroke:0.25px #6a6a6a">Notes</span>
<div style="left:750px;top:587.7px;width:296px;height:1px;background:#e6e6e6"></div>
<div style="left:750px;top:588.7px;width:296px;height:21.2px;background:#f5f5f5;border-radius:0 0 7px 7px"></div>
<span style="left:758.6px;transform-origin:left center;top:593.85px;font-size:11.05px;line-height:11.05px;font-weight:400;color:#333;transform:scaleX(0.9480);">8/12/2025</span>
<span style="left:841px;transform-origin:left center;top:593.85px;font-size:11.05px;line-height:11.05px;font-weight:400;color:#333;transform:scaleX(0.9208);">Created</span>
<span style="left:940px;transform-origin:left center;top:593.85px;font-size:11.05px;line-height:11.05px;font-weight:400;color:#333;">-</span>
<div style="left:749.4px;top:628.7px;width:297.1px;height:91.29999999999995px;background:#fff;border:1px solid #e4e7ec;border-radius:8px;box-sizing:border-box"></div>
<span style="left:757px;transform-origin:left center;top:638.33px;font-size:13.08px;line-height:13.08px;font-weight:700;color:#111;transform:scaleX(0.9018);">Attachment Status</span>
<div style="left:750px;top:661px;width:296px;height:1px;background:#e6e6e6"></div>
<span style="left:757px;transform-origin:left center;top:671.65px;font-size:11.05px;line-height:11.05px;font-weight:400;color:#6a6a6a;">ID</span>
<span style="left:780.3px;transform-origin:left center;top:671.65px;font-size:11.05px;line-height:11.05px;font-weight:400;color:#6a6a6a;transform:scaleX(0.9768);">Status</span>
<span style="left:826.9px;transform-origin:left center;top:671.65px;font-size:11.05px;line-height:11.05px;font-weight:400;color:#6a6a6a;transform:scaleX(0.9598);">Notes</span>
<div style="left:0px;top:0px;width:1px;height:676px;background:#0078d4"></div>
<div style="left:1078.5px;top:0px;width:1.5px;height:676px;background:#0078d4"></div>
<div style="left:0px;top:674.4px;width:1080px;height:1.6px;background:#0078d4"></div>
</body></html>
